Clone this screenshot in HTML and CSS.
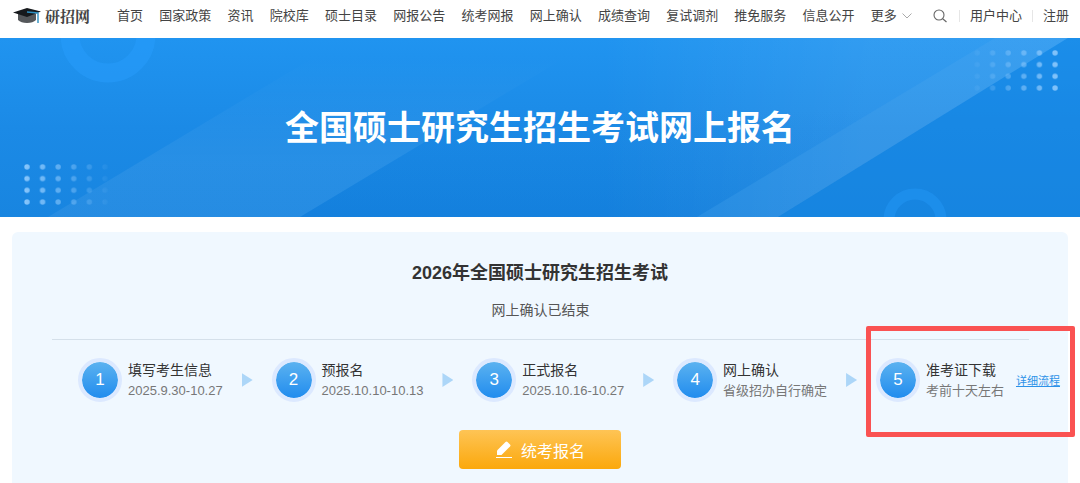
FILE: index.html
```html
<!DOCTYPE html>
<html lang="zh-CN">
<head>
<meta charset="utf-8">
<title>全国硕士研究生招生考试网上报名</title>
<link rel="stylesheet" href="styles.css">
</head>
<body>
<header class="topbar">
  <a class="logo" href="#">
    <svg class="logo-cap" viewBox="0 0 28 16" aria-hidden="true">
      <path d="M5 6v6q3 3 9 3t9-3V6z" fill="#55585b"/>
      <path d="M0 4.500 14 0l14 3.500L14 9z" fill="#16191c"/>
      <path d="M14 4 25 5v10" fill="none" stroke="#2c8fc0" stroke-width="1.400"/>
    </svg>
    <span>研招网</span>
  </a>
  <nav class="menu">
    <a href="#">首页</a>
    <a href="#">国家政策</a>
    <a href="#">资讯</a>
    <a href="#">院校库</a>
    <a href="#">硕士目录</a>
    <a href="#">网报公告</a>
    <a href="#">统考网报</a>
    <a href="#">网上确认</a>
    <a href="#">成绩查询</a>
    <a href="#">复试调剂</a>
    <a href="#">推免服务</a>
    <a href="#">信息公开</a>
    <a class="more" href="#">更多
      <svg class="chevron" viewBox="0 0 10 6" aria-hidden="true"><path d="M.5.5 5 5 9.500.5" fill="none" stroke="#aaa"/></svg>
    </a>
  </nav>
  <div class="user">
    <button class="search" type="button" aria-label="搜索">
      <svg viewBox="0 0 14 14" aria-hidden="true"><circle cx="6" cy="6" r="5" fill="none" stroke="#666" stroke-width="1.100"/><path d="m9.700 9.700 3.800 3.300" stroke="#666" stroke-width="1.200"/></svg>
    </button>
    <a href="#">用户中心</a>
    <a href="#">注册</a>
  </div>
</header>

<section class="banner">
  <svg class="banner-art" viewBox="0 0 1080 179" preserveAspectRatio="xMidYMid slice" aria-hidden="true">
    <defs>
      <linearGradient id="band-left" x1="0" y1="0" x2="0" y2="1"><stop offset="0.100" stop-color="#fff" stop-opacity="0"/><stop offset="0.700" stop-color="#fff" stop-opacity=".06"/></linearGradient>
      <linearGradient id="glow" x1="0" y1="0" x2="1" y2="0"><stop offset="0.300" stop-color="#fff" stop-opacity="0"/><stop offset="0.700" stop-color="#fff" stop-opacity=".08"/></linearGradient>
      <linearGradient id="shade" x1="0" y1="0" x2="0" y2="1"><stop offset="0.400" stop-color="#0a74d6" stop-opacity="0"/><stop offset="1" stop-color="#0a74d6" stop-opacity=".3"/></linearGradient>
      <linearGradient id="fade-right"><stop offset="0" stop-color="#fff" stop-opacity="0"/><stop offset="1" stop-color="#fff"/></linearGradient>
      <linearGradient id="fade-left"><stop offset="0" stop-color="#fff"/><stop offset="1" stop-color="#fff" stop-opacity="0"/></linearGradient>
      <mask id="mask-right" maskUnits="userSpaceOnUse" x="965" y="0" width="100" height="70"><rect x="965" y="0" width="100" height="70" fill="url(#fade-right)"/></mask>
      <mask id="mask-left" maskUnits="userSpaceOnUse" x="20" y="115" width="95" height="64"><rect x="20" y="115" width="95" height="64" fill="url(#fade-left)"/></mask>
      <pattern id="dots" width="15.600" height="11.700" patternUnits="userSpaceOnUse"><circle cx="4" cy="4" r="2.700" fill="#8cc8fc"/></pattern>
    </defs>
    <path d="M48 179 346 0H598L300 179z" fill="url(#band-left)"/>
    <path d="M300 179 598 0H995L697 179z" fill="url(#shade)"/>
    <path d="M400 179 598 0H1068L778 179z" fill="url(#glow)"/>
    <path d="M697 179 995 0H1068L778 179z" fill="#fff" fill-opacity=".04"/>
    <path d="M778 179 1068 0H1080V179z" fill="#1485e0" fill-opacity=".4"/>
    <circle cx="108" cy="-3" r="38" fill="none" stroke="#279bfa" stroke-width="19" stroke-opacity=".6"/>
    <circle cx="915" cy="182" r="26" fill="none" stroke="#1f91f0" stroke-width="11" stroke-opacity=".7"/>
    <g mask="url(#mask-right)"><g transform="translate(973 11)"><rect width="93" height="46" fill="url(#dots)"/></g></g>
    <g mask="url(#mask-left)"><g transform="translate(23 125)"><rect width="93" height="46" fill="url(#dots)"/></g></g>
  </svg>
  <h1 class="banner-title">全国硕士研究生招生考试网上报名</h1>
</section>

<main class="panel">
  <h2 class="panel-title">2026年全国硕士研究生招生考试</h2>
  <p class="status">网上确认已结束</p>
  <ol class="steps">
    <li class="step"><span class="num">1</span><div><h3>填写考生信息</h3><p>2025.9.30-10.27</p></div></li>
    <li class="arrow" aria-hidden="true"></li>
    <li class="step"><span class="num">2</span><div><h3>预报名</h3><p>2025.10.10-10.13</p></div></li>
    <li class="arrow" aria-hidden="true"></li>
    <li class="step"><span class="num">3</span><div><h3>正式报名</h3><p>2025.10.16-10.27</p></div></li>
    <li class="arrow" aria-hidden="true"></li>
    <li class="step"><span class="num">4</span><div><h3>网上确认</h3><p>省级招办自行确定</p></div></li>
    <li class="arrow" aria-hidden="true"></li>
    <li class="step"><span class="num">5</span><div><h3>准考证下载</h3><p>考前十天左右</p></div><a class="detail" href="#">详细流程</a></li>
  </ol>
  <button class="apply" type="button">
    <svg viewBox="0 0 18 18" aria-hidden="true"><path d="M2 14V9.500L10.500 1q1-1 2 0L15 3.500q1 1 0 2L6.500 14z" fill="#fff"/><path d="M1 16.500h16" stroke="#fff"/></svg>
    <span>统考报名</span>
  </button>
  <div class="highlight"></div>
</main>
</body>
</html>
```
FILE: styles.css
```css
* { box-sizing: border-box; }

body {
  margin: 0;
  background: #fff;
  color: #333;
  font-family: "Liberation Sans", "Noto Sans CJK SC", sans-serif;
  font-size: 13px;
}

h1, h2, h3, p, ol { margin: 0; padding: 0; }
a { color: inherit; text-decoration: none; }
button { border: 0; padding: 0; font: inherit; cursor: pointer; }

.topbar {
  display: flex;
  align-items: center;
  padding: 6px 11px 12px 13px;
  color: #444;
  line-height: 20px;
  white-space: nowrap;
}

.logo {
  display: flex;
  align-items: center;
  gap: 4px;
  margin-right: 27px;
  font-family: "Noto Serif CJK SC", "Noto Sans CJK SC", serif;
  font-size: 15px;
  font-weight: 700;
}
.logo-cap { width: 28px; height: 16px; }

.menu { display: flex; flex: 1; justify-content: space-between; }
.more { display: flex; align-items: center; gap: 5px; }
.chevron { width: 10px; height: 6px; }

.user { display: flex; align-items: center; margin-left: 21px; }
.search { display: flex; background: none; margin-right: 12px; }
.search svg { width: 14px; height: 14px; }
.user a {
  padding-left: 10px;
  line-height: 12px;
  border-left: 1px solid #e6e6e6;
}
.user a + a { margin-left: 10px; }

.banner {
  position: relative;
  padding: 66px 0 64px;
  background: linear-gradient(#2094f0, #1b8ae6 50%, #1885e0);
  text-align: center;
}
.banner-art {
  position: absolute;
  inset: 0;
  width: 100%;
  height: 100%;
}
.banner-title {
  position: relative;
  color: #fff;
  font-size: 34px;
  font-weight: 700;
  line-height: 49px;
}

.panel {
  position: relative;
  margin: 15px 12px 0;
  padding: 28px 0 14px;
  border-radius: 6px 6px 0 0;
  background: #f0f8ff;
}
.panel-title {
  font-size: 18px;
  line-height: 26px;
  text-align: center;
}
.status {
  margin: 14px 39px 0 40px;
  padding-bottom: 19px;
  border-bottom: 1px solid #d5e0ea;
  color: #555;
  font-size: 14px;
  line-height: 20px;
  text-align: center;
}

.steps {
  display: flex;
  align-items: center;
  justify-content: space-between;
  margin-top: 18px;
  padding: 0 8px 0 66px;
  list-style: none;
  white-space: nowrap;
}
.step { display: flex; align-items: center; gap: 6px; }
.step h3 { font-size: 14px; font-weight: 400; line-height: 22px; }
.step p { color: #777; font-size: 13px; line-height: 20px; }
.num {
  width: 44px;
  height: 44px;
  border: 4px solid #dce9ff;
  border-radius: 50%;
  background: linear-gradient(#5bb2f0, #218cee) padding-box;
  color: #fff;
  font-size: 17px;
  line-height: 36px;
  text-align: center;
}
.arrow {
  width: 11px;
  height: 14px;
  background: #acd6f8;
  clip-path: polygon(0 0, 100% 50%, 0 100%);
}
.detail {
  margin-left: 6px;
  color: #2c92e8;
  font-size: 11px;
  text-decoration: underline;
}

.apply {
  display: flex;
  align-items: center;
  justify-content: center;
  gap: 8px;
  width: 162px;
  height: 39px;
  margin: 28px auto 0;
  border-radius: 4px;
  background: linear-gradient(#fec455, #fba80c);
  color: #fff;
  font-size: 16px;
}
.apply svg { width: 18px; height: 18px; }

.highlight {
  position: absolute;
  top: 94px;
  right: -7px;
  width: 209px;
  height: 111px;
  border: 5px solid #fa5252;
  border-radius: 2px;
  pointer-events: none;
}
```
